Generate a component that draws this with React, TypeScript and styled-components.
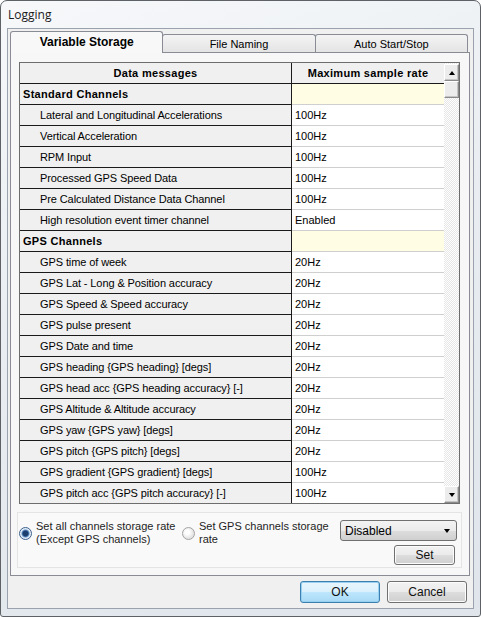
import React from 'react';
import styled, { createGlobalStyle, css } from 'styled-components';

const GlobalStyle = createGlobalStyle`
  html, body {
    margin: 0;
    padding: 0;
    background: #ffffff;
  }
  body {
    font-family: "Liberation Sans", Arial, sans-serif;
    font-size: 11px;
    color: #000;
  }
`;

const Window = styled.div`
  box-sizing: border-box;
  width: 481px;
  height: 617px;
  border: 1px solid #5e6267;
  border-radius: 7px 7px 3px 3px;
  background: linear-gradient(160deg, #f6f8fa 0%, #e9edf1 45%, #dfe5eb 100%);
  display: flex;
  flex-direction: column;
`;

const TitleBar = styled.div`
  height: 27px;
  padding-left: 7px;
  display: flex;
  align-items: center;
  font-family: "Open Sans", "Liberation Sans", sans-serif;
  font-size: 12px;
  color: #1b1b1b;
`;

const Client = styled.div`
  box-sizing: border-box;
  flex: 1;
  margin: 0 6px 7px 6px;
  border: 1px solid #9aa3ad;
  background: #f0f0f0;
  padding: 2px 5px 0 2px;
  display: flex;
  flex-direction: column;
`;

const TabStrip = styled.div`
  display: flex;
  align-items: flex-end;
  height: 21px;
  position: relative;
  z-index: 1;
`;

const Tab = styled.div<{ $active?: boolean }>`
  box-sizing: border-box;
  width: 154px;
  height: 18px;
  margin-left: -1px;
  border: 1px solid #898c95;
  border-bottom: none;
  border-radius: 3px 3px 0 0;
  background: linear-gradient(#f4f4f4, #e4e4e4);
  display: flex;
  align-items: center;
  justify-content: center;
  font-size: 11px;
  &:first-child {
    margin-left: 0;
  }
  ${(p) =>
    p.$active &&
    css`
      height: 22px;
      margin-bottom: -1px;
      background: #f8f8f8;
      font-weight: bold;
      font-size: 12px;
      padding-bottom: 2px;
    `}
`;

const Panel = styled.div`
  box-sizing: border-box;
  width: 460px;
  height: 524px;
  border: 1px solid #898c95;
  background: #f7f7f7;
  padding: 9px 8px 0 6px;
  display: flex;
  flex-direction: column;
`;

const GridBox = styled.div`
  box-sizing: border-box;
  width: 441px;
  height: 442px;
  margin-left: 2px;
  border: 1px solid #6d6d6d;
  display: flex;
  overflow: hidden;
  background: #fff;
`;

const Table = styled.div`
  display: grid;
  grid-template-columns: 272px 152px;
  grid-auto-rows: 21px;
  align-content: start;
`;

const Cell = styled.div<{ $kind: 'head' | 'name' | 'value'; $category?: boolean; $indent?: boolean }>`
  box-sizing: border-box;
  display: flex;
  align-items: center;
  white-space: nowrap;
  overflow: hidden;
  border-bottom: 1px solid #1a1a1a;
  ${(p) =>
    p.$kind === 'head' &&
    css`
      justify-content: center;
      background: #f0f0f0;
      font-weight: bold;
      letter-spacing: 0.3px;
    `}
  ${(p) =>
    p.$kind === 'name' &&
    css`
      background: #f0f0f0;
      padding-left: ${p.$indent ? '20px' : '3px'};
      font-weight: ${p.$category ? 'bold' : 'normal'};
      letter-spacing: ${p.$category ? '0.3px' : '-0.1px'};
    `}
  ${(p) =>
    p.$kind === 'value' &&
    css`
      background: ${p.$category ? '#fffde3' : '#ffffff'};
      border-bottom-color: #cfcfcf;
      padding-left: 3px;
    `}
  &:nth-child(odd) {
    border-right: 1px solid #1a1a1a;
  }
`;

const ScrollBar = styled.div`
  width: 15px;
  display: flex;
  flex-direction: column;
  background-color: #f0f0f0;
  background-image: repeating-conic-gradient(#ffffff 0 25%, #e6e6e6 0 50%);
  background-size: 2px 2px;
  padding-top: 1px;
`;

const ScrollButton = styled.div`
  box-sizing: border-box;
  height: 17px;
  border: 1px solid;
  border-color: #ffffff #8a8a8a #8a8a8a #ffffff;
  background: #ececec;
  box-shadow: inset -1px -1px 0 #c4c4c4;
  display: flex;
  align-items: center;
  justify-content: center;
`;

const Track = styled.div`
  flex: 1;
`;

const Arrow = styled.span<{ $down?: boolean }>`
  width: 0;
  height: 0;
  border-left: 3.5px solid transparent;
  border-right: 3.5px solid transparent;
  ${(p) =>
    p.$down
      ? css`
          border-top: 4px solid #000;
        `
      : css`
          border-bottom: 4px solid #000;
        `}
`;

const OptionsBox = styled.div`
  box-sizing: border-box;
  width: 445px;
  height: 56px;
  margin-top: 8px;
  border: 1px solid #e4e4e4;
  background: #f9f9f9;
  padding: 7px 4px 0 1px;
  display: flex;
  align-items: flex-start;
  font-size: 11px;
`;

const RadioOption = styled.label<{ $width: number }>`
  width: ${(p) => p.$width}px;
  display: flex;
  align-items: center;
  gap: 4px;
  color: #1e1e1e;
  line-height: 13px;
`;

const RadioDot = styled.span<{ $checked?: boolean }>`
  box-sizing: border-box;
  flex: none;
  width: 13px;
  height: 13px;
  border-radius: 50%;
  margin-top: 1px;
  border: 1px solid ${(p) => (p.$checked ? '#3b5f8c' : '#a3a3a3')};
  background: ${(p) =>
    p.$checked
      ? 'radial-gradient(circle, #1c3f6e 0 2.5px, #5d8dc4 3.5px, #dde9f5 4.5px, #f5f8fb 6px)'
      : 'radial-gradient(circle at 40% 40%, #ffffff 0 2px, #e4e4e4 6px)'};
`;

const RightControls = styled.div`
  width: 117px;
  display: flex;
  flex-direction: column;
  align-items: flex-end;
  gap: 4px;
`;

const Select = styled.div`
  box-sizing: border-box;
  width: 117px;
  height: 21px;
  border: 1px solid #707070;
  border-radius: 3px;
  background: linear-gradient(#f3f3f3 0%, #ebebeb 50%, #dddddd 51%, #cfcfcf 100%);
  display: flex;
  align-items: center;
  justify-content: space-between;
  padding: 0 6px 0 4px;
  font-size: 12px;
`;

const Button = styled.div<{ $default?: boolean; $w: number; $h: number }>`
  box-sizing: border-box;
  width: ${(p) => p.$w}px;
  height: ${(p) => p.$h}px;
  border: 1px solid ${(p) => (p.$default ? '#3c7fb1' : '#707070')};
  border-radius: 3px;
  background: ${(p) =>
    p.$default
      ? 'linear-gradient(#eaf6fd 0%, #d9f0fc 50%, #bee6fd 51%, #a7d9f5 100%)'
      : 'linear-gradient(#f2f2f2 0%, #ebebeb 50%, #dddddd 51%, #cfcfcf 100%)'};
  box-shadow: inset 0 0 0 1px ${(p) => (p.$default ? '#98d1ef' : '#fcfcfc')};
  display: flex;
  align-items: center;
  justify-content: center;
  font-size: 12px;
  color: #111;
`;

const SetButton = styled(Button)`
  margin-right: 2px;
`;

const ButtonRow = styled.div`
  display: flex;
  justify-content: flex-end;
  gap: 7px;
  margin-top: 5px;
  padding-right: 1px;
`;

type Row = { name: string; value?: string; category?: boolean };

const rows: Row[] = [
  { name: 'Standard Channels', category: true },
  { name: 'Lateral and Longitudinal Accelerations', value: '100Hz' },
  { name: 'Vertical Acceleration', value: '100Hz' },
  { name: 'RPM Input', value: '100Hz' },
  { name: 'Processed GPS Speed Data', value: '100Hz' },
  { name: 'Pre Calculated Distance Data Channel', value: '100Hz' },
  { name: 'High resolution event timer channel', value: 'Enabled' },
  { name: 'GPS Channels', category: true },
  { name: 'GPS time of week', value: '20Hz' },
  { name: 'GPS Lat - Long & Position accuracy', value: '20Hz' },
  { name: 'GPS Speed & Speed accuracy', value: '20Hz' },
  { name: 'GPS pulse present', value: '20Hz' },
  { name: 'GPS Date and time', value: '20Hz' },
  { name: 'GPS heading {GPS heading} [degs]', value: '20Hz' },
  { name: 'GPS head acc {GPS heading accuracy} [-]', value: '20Hz' },
  { name: 'GPS Altitude & Altitude accuracy', value: '20Hz' },
  { name: 'GPS yaw {GPS yaw} [degs]', value: '20Hz' },
  { name: 'GPS pitch {GPS pitch} [degs]', value: '20Hz' },
  { name: 'GPS gradient {GPS gradient} [degs]', value: '100Hz' },
  { name: 'GPS pitch acc {GPS pitch accuracy} [-]', value: '100Hz' },
];

const App: React.FC = () => {
  return (
    <>
      <GlobalStyle />
      <Window>
        <TitleBar>Logging</TitleBar>
        <Client>
          <TabStrip>
            <Tab $active>Variable Storage</Tab>
            <Tab>File Naming</Tab>
            <Tab>Auto Start/Stop</Tab>
          </TabStrip>
          <Panel>
            <GridBox>
              <Table>
                <Cell $kind="head">Data messages</Cell>
                <Cell $kind="head">Maximum sample rate</Cell>
                {rows.map((r) => (
                  <React.Fragment key={r.name}>
                    <Cell $kind="name" $category={r.category} $indent={!r.category}>
                      {r.name}
                    </Cell>
                    <Cell $kind="value" $category={r.category}>
                      {r.value}
                    </Cell>
                  </React.Fragment>
                ))}
              </Table>
              <ScrollBar>
                <ScrollButton>
                  <Arrow />
                </ScrollButton>
                <ScrollButton />
                <Track />
                <ScrollButton>
                  <Arrow $down />
                </ScrollButton>
              </ScrollBar>
            </GridBox>
            <OptionsBox>
              <RadioOption $width={163}>
                <RadioDot $checked />
                <span>
                  Set all channels storage rate
                  <br />
                  (Except GPS channels)
                </span>
              </RadioOption>
              <RadioOption $width={158}>
                <RadioDot />
                <span>
                  Set GPS channels storage
                  <br />
                  rate
                </span>
              </RadioOption>
              <RightControls>
                <Select>
                  <span>Disabled</span>
                  <Arrow $down />
                </Select>
                <SetButton $w={61} $h={20}>
                  Set
                </SetButton>
              </RightControls>
            </OptionsBox>
          </Panel>
          <ButtonRow>
            <Button $default $w={80} $h={22}>
              OK
            </Button>
            <Button $w={80} $h={22}>
              Cancel
            </Button>
          </ButtonRow>
        </Client>
      </Window>
    </>
  );
};

export default App;
